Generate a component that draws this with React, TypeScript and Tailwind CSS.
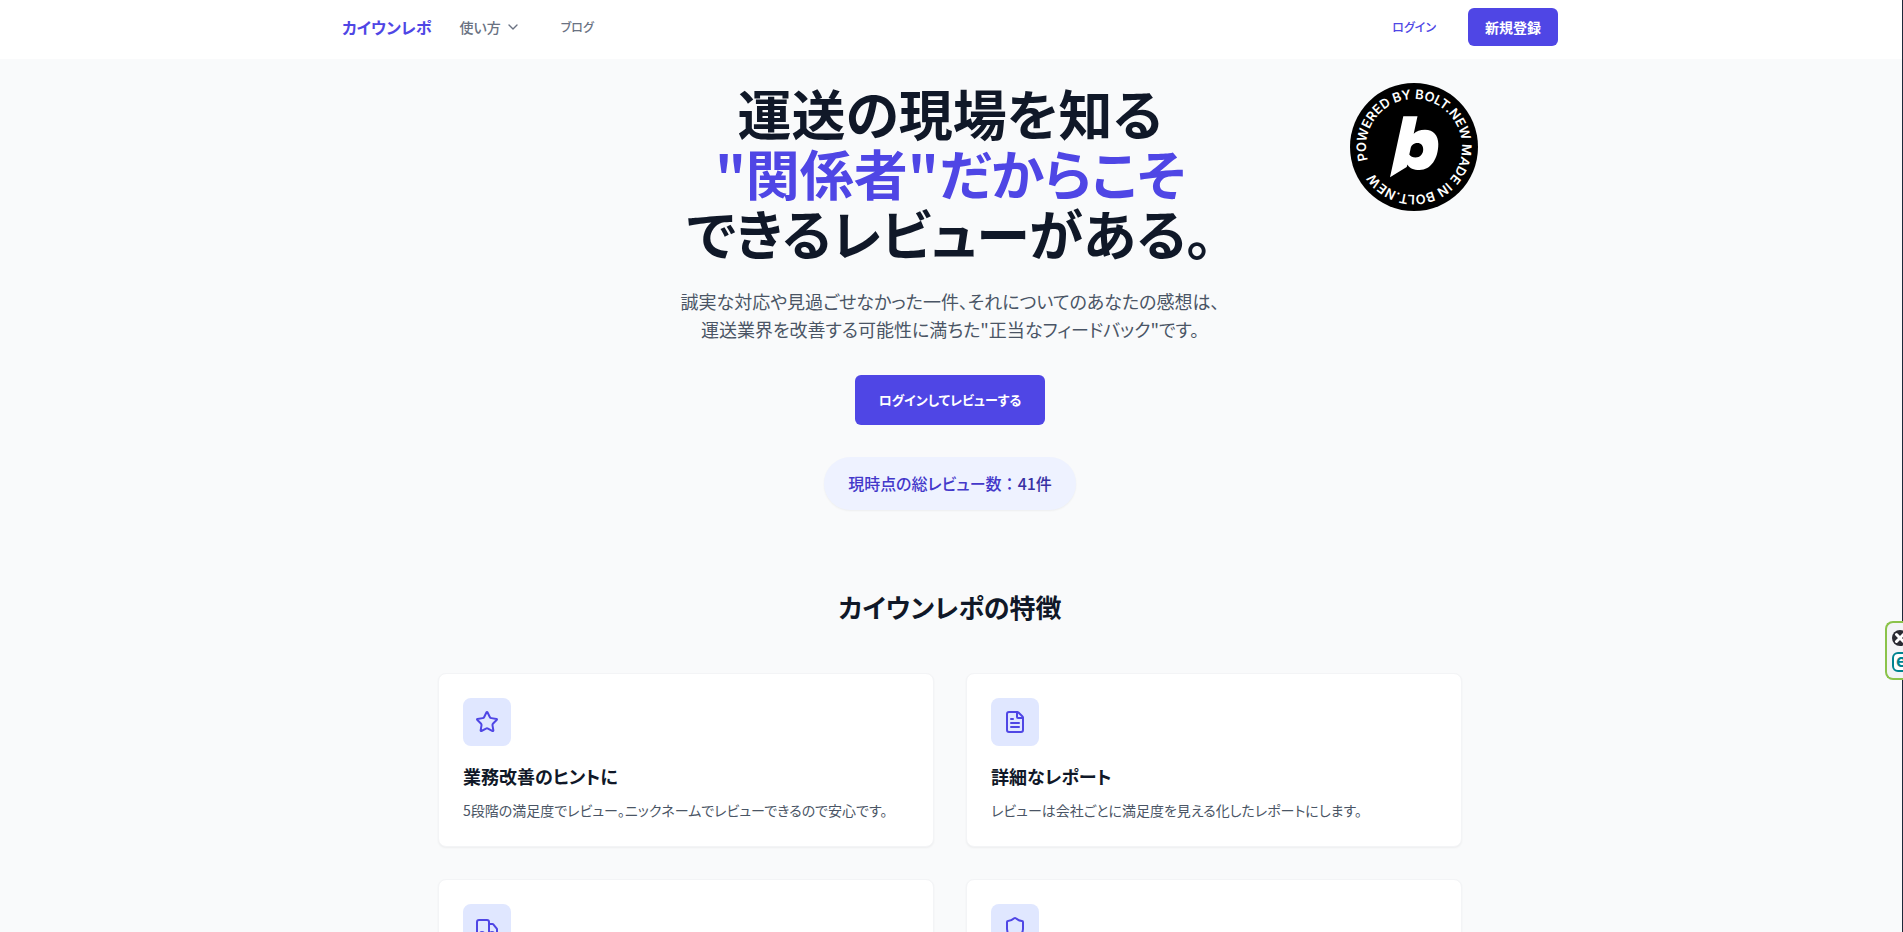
import { ChevronDown, FileText, Shield, Star, Truck, type LucideIcon } from "lucide-react";

type Feature = {
    icon: LucideIcon;
    title?: string;
    description?: string;
};

const features: Feature[] = [
    {
        icon: Star,
        title: "業務改善のヒントに",
        description: "5段階の満足度でレビュー。ニックネームでレビューできるので安心です。",
    },
    {
        icon: FileText,
        title: "詳細なレポート",
        description: "レビューは会社ごとに満足度を見える化したレポートにします。",
    },
    { icon: Truck },
    { icon: Shield },
];

function Header() {
    return (
        <header className="h-[59px] bg-white pr-0.5 pb-[5px]">
            <div className="mx-auto flex h-full max-w-7xl items-center justify-between px-8">
                <div className="flex items-center">
                    <a href="/" className="text-base font-bold text-[#4f46e5]">カイウンレポ</a>
                    <nav className="ml-7 flex items-center gap-10 font-medium text-gray-500">
                        <button type="button" className="flex items-center gap-1 text-sm">
                            使い方
                            <ChevronDown className="size-4" />
                        </button>
                        <a href="/blog" className="text-xs">ブログ</a>
                    </nav>
                </div>
                <div className="flex items-center gap-8">
                    <a href="/login" className="text-xs font-medium text-[#4f46e5]">ログイン</a>
                    <a href="/signup" className="rounded-md bg-[#4f46e5] px-[17px] py-[9px] text-sm font-bold text-white">
                        新規登録
                    </a>
                </div>
            </div>
        </header>
    );
}

function BoltBadge() {
    return (
        <a href="https://bolt.new" className="absolute top-6 right-28 size-32" aria-label="Bolt.new">
            <svg viewBox="0 0 128 128" className="size-full">
                <circle cx="64" cy="64" r="64" fill="#000" />
                <defs>
                    <path id="ring" d="M16 64 a48 48 0 1 1 96 0 a48 48 0 1 1 -96 0" />
                </defs>
                <g transform="rotate(-16 64 64)">
                    <text fill="#fff" fontSize="13" fontWeight="600" fontFamily="Inter, sans-serif">
                        <textPath href="#ring">POWERED BY BOLT.NEW MADE IN BOLT.NEW</textPath>
                    </text>
                </g>
                <path
                    fill="#fff"
                    fillRule="evenodd"
                    d="M53.300 33.300 H67.500 L63.700 50.700 C66.500 48 70 46.700 75 46.700 C83.500 46.700 88.300 52.500 88.300 61 C88.300 75.500 81 87 69.500 87 C63.500 87 59.500 85.500 57.500 81.500 L56.700 84 L40 94.300 Z M67.500 60 C63.500 60 61 62.500 60.500 66 L59.300 71.500 C60.500 73.500 62.700 74.500 65.500 74.500 C70 74.500 73.200 71 73.200 66.500 C73.200 62.500 71 60 67.500 60 Z"
                />
            </svg>
        </a>
    );
}

function Hero() {
    return (
        <section className="relative mx-auto max-w-7xl px-8 pt-6 text-center">
            <BoltBadge />
            <h1 className="text-[54px] leading-[60px] font-bold text-gray-900">
                運送の現場を知る
                <br />
                <span className="text-[#4f46e5]">"関係者"だからこそ</span>
                <br />
                できるレビューがある。
            </h1>
            <p className="mt-6 text-lg leading-7 text-gray-600">
                誠実な対応や見過ごせなかった一件、それについてのあなたの感想は、
                <br />
                運送業界を改善する可能性に満ちた"正当なフィードバック"です。
            </p>
            <div className="mt-8 flex flex-col items-center gap-8">
                <a href="/login" className="rounded-md bg-[#4f46e5] px-6 py-[13px] text-[13px] leading-6 font-bold text-white">
                    ログインしてレビューする
                </a>
                <p className="rounded-full bg-[#eef2ff] px-6 py-3 text-base leading-[29px] font-medium text-[#4338ca] shadow-xs">
                    現時点の総レビュー数
                    <span className="[font-feature-settings:normal]">：</span>
                    <span className="text-[#3730a3]">41件</span>
                </p>
            </div>
        </section>
    );
}

function FeatureCard({ icon: Icon, title, description }: Feature) {
    return (
        <article className="rounded-lg border border-gray-100 bg-white p-6 shadow-xs">
            <div className="mb-4 flex size-12 items-center justify-center rounded-lg bg-[#e0e7ff]">
                <Icon className="size-6 text-[#4f46e5]" />
            </div>
            {title && <h3 className="mb-2 text-lg leading-7 font-bold text-gray-900">{title}</h3>}
            {description && <p className="text-sm leading-6 text-gray-600">{description}</p>}
        </article>
    );
}

function SideWidget() {
    return (
        <aside className="fixed top-[621px] right-0 flex h-[59px] w-[18px] flex-col gap-1.5 overflow-hidden rounded-l-lg border-2 border-r-0 border-[#8bc34a] bg-gray-100 pt-[7px] pl-[5px]">
            <svg viewBox="0 0 16 16" className="size-4 shrink-0">
                <circle cx="8" cy="8" r="8" fill="#2b2b33" />
                <path d="M4.500 4.500 L11.500 11.500 M11.500 4.500 L4.500 11.500" stroke="#fff" strokeWidth="3" strokeLinecap="round" />
            </svg>
            <svg viewBox="0 0 20 20" className="size-5 shrink-0">
                <rect x="1" y="1" width="18" height="18" rx="5" fill="#fff" stroke="#00838f" strokeWidth="2" />
                <text x="4" y="15" fontSize="17" fontWeight="700" fill="#00838f">e</text>
            </svg>
        </aside>
    );
}

export default function App() {
    return (
        <div className="min-h-screen border-r border-gray-800 bg-gray-50 font-['Noto_Sans_CJK_JP',sans-serif] [font-feature-settings:'palt']">
            <Header />
            <main className="pr-0.5">
                <Hero />
                <section className="mx-auto max-w-5xl pt-[79px] pb-16">
                    <h2 className="text-center text-[26px] leading-9 font-bold text-gray-900">カイウンレポの特徴</h2>
                    <div className="mt-12 grid auto-rows-fr grid-cols-2 gap-8">
                        {features.map((feature, index) => (
                            <FeatureCard key={index} {...feature} />
                        ))}
                    </div>
                </section>
            </main>
            <SideWidget />
        </div>
    );
}
